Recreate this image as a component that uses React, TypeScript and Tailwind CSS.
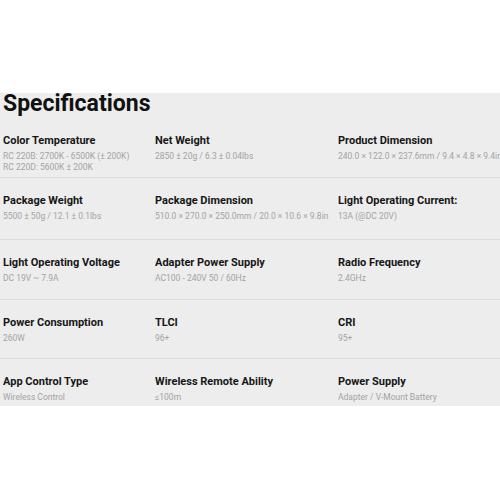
import React from "react";

type Spec = { label: string; values: string[] };

const rows: Spec[][] = [
  [
    { label: "Color Temperature", values: ["RC 220B: 2700K - 6500K (± 200K)", "RC 220D: 5600K ± 200K"] },
    { label: "Net Weight", values: ["2850 ± 20g / 6.3 ± 0.04lbs"] },
    { label: "Product Dimension", values: ["240.0 × 122.0 × 237.6mm / 9.4 × 4.8 × 9.4in"] },
  ],
  [
    { label: "Package Weight", values: ["5500 ± 50g / 12.1 ± 0.1lbs"] },
    { label: "Package Dimension", values: ["510.0 × 270.0 × 250.0mm / 20.0 × 10.6 × 9.8in"] },
    { label: "Light Operating Current:", values: ["13A (@DC 20V)"] },
  ],
  [
    { label: "Light Operating Voltage", values: ["DC 19V ~ 7.9A"] },
    { label: "Adapter Power Supply", values: ["AC100 - 240V 50 / 60Hz"] },
    { label: "Radio Frequency", values: ["2.4GHz"] },
  ],
  [
    { label: "Power Consumption", values: ["260W"] },
    { label: "TLCI", values: ["96+"] },
    { label: "CRI", values: ["95+"] },
  ],
  [
    { label: "App Control Type", values: ["Wireless Control"] },
    { label: "Wireless Remote Ability", values: ["≤100m"] },
    { label: "Power Supply", values: ["Adapter / V-Mount Battery"] },
  ],
];

const rowClasses = [
  "h-[60px] border-b border-[#dcdcdc]",
  "h-[62px] border-b border-[#dcdcdc]",
  "h-[60px] border-b border-[#dcdcdc]",
  "h-[59px] border-b border-[#dcdcdc]",
  "h-[47px]",
];

export default function App() {
  return (
    <div
      className="w-[500px] h-[500px] bg-white overflow-hidden"
      style={{ fontFamily: "Roboto, 'Liberation Sans', sans-serif" }}
    >
      <div className="h-[93px]" />
      <div className="bg-[#ededed] flex flex-col">
        <h2 className="pl-[3px] -mt-[3px] text-[23px] leading-[28px] font-bold text-[#111111]">
          Specifications
        </h2>
        {rows.map((row, i) => (
          <div
            key={i}
            className={"grid grid-cols-[152px_183px_165px] pl-[3px] pt-[15px] " + rowClasses[i]}
          >
            {row.map((s) => (
              <div key={s.label} className="min-w-0 whitespace-nowrap overflow-hidden">
                <div className="text-[11px] leading-[16px] font-bold text-[#161616]">{s.label}</div>
                <div className="mt-[2px]">
                  {s.values.map((v) => (
                    <div key={v} className="text-[8.5px] leading-[11px] text-[#a3a3a3]">
                      {v}
                    </div>
                  ))}
                </div>
              </div>
            ))}
          </div>
        ))}
      </div>
    </div>
  );
}
